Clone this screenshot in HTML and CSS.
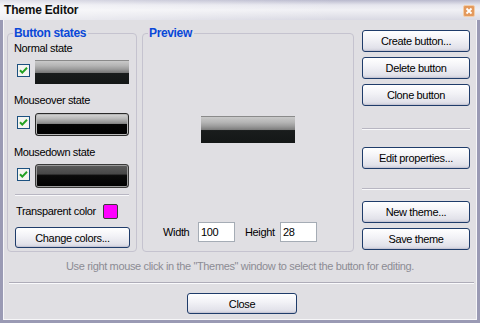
FILE: index.html
```html
<!DOCTYPE html>
<html lang="en">
<head>
    <meta charset="UTF-8">
    <title>Theme Editor</title>
    <link rel="stylesheet" href="styles.css">
</head>
<body>
    <div class="window">
        <div class="titlebar">
            <span class="title">Theme Editor</span>
            <span class="close-x">
                <svg width="12" height="12" viewBox="0 0 12 12">
                    <rect x="0.5" y="0.5" width="11" height="11" rx="1.5" fill="#e3995d" stroke="#f3cda9"/>
                    <path d="M3.5 3.5 L8.5 8.5 M8.5 3.5 L3.5 8.5" stroke="#fff" stroke-width="1.8"/>
                </svg>
            </span>
        </div>
        <div class="content">
            <div class="top">
                <!-- button states -->
                <div class="group states">
                    <div class="group-title">Button states</div>

                    <div class="state-label">Normal state</div>
                    <div class="state-row">
                        <span class="check"><svg width="13" height="13" viewBox="0 0 13 13"><rect x="0.5" y="0.5" width="12" height="12" fill="#f4f4f0" stroke="#1c5180"/><path d="M3 6.2 L5.3 8.6 L10 3.8" fill="none" stroke="#21a121" stroke-width="2"/></svg></span>
                        <div class="look normal"></div>
                    </div>

                    <div class="state-label">Mouseover state</div>
                    <div class="state-row">
                        <span class="check"><svg width="13" height="13" viewBox="0 0 13 13"><rect x="0.5" y="0.5" width="12" height="12" fill="#f4f4f0" stroke="#1c5180"/><path d="M3 6.2 L5.3 8.6 L10 3.8" fill="none" stroke="#21a121" stroke-width="2"/></svg></span>
                        <div class="look over"></div>
                    </div>

                    <div class="state-label">Mousedown state</div>
                    <div class="state-row">
                        <span class="check"><svg width="13" height="13" viewBox="0 0 13 13"><rect x="0.5" y="0.5" width="12" height="12" fill="#f4f4f0" stroke="#1c5180"/><path d="M3 6.2 L5.3 8.6 L10 3.8" fill="none" stroke="#21a121" stroke-width="2"/></svg></span>
                        <div class="look down"></div>
                    </div>

                    <div class="sep"></div>

                    <div class="transparent-row">
                        <span class="transparent-label">Transparent color</span>
                        <span class="color-box"></span>
                    </div>
                    <button class="btn change">Change colors...</button>
                </div>

                <!-- preview -->
                <div class="group preview">
                    <div class="group-title">Preview</div>
                    <div class="look normal big"></div>
                    <div class="size-row">
                        <label for="w">Width</label>
                        <input type="text" id="w" value="100">
                        <label for="h">Height</label>
                        <input type="text" id="h" value="28">
                    </div>
                </div>

                <!-- actions -->
                <div class="actions">
                    <button class="btn">Create button...</button>
                    <button class="btn gap">Delete button</button>
                    <button class="btn gap">Clone button</button>
                    <div class="sep first"></div>
                    <button class="btn edit">Edit properties...</button>
                    <div class="sep second"></div>
                    <button class="btn new">New theme...</button>
                    <button class="btn gap">Save theme</button>
                </div>
            </div>

            <p class="hint">Use right mouse click in the "Themes" window to select the button for editing.</p>
            <div class="hr"></div>
            <div class="footer">
                <button class="btn close">Close</button>
            </div>
        </div>
    </div>
</body>
</html>
```

FILE: styles.css
```css
body {
    margin: 0;
    font-family: "Liberation Sans", Arial, sans-serif;
    font-size: 11px;
    letter-spacing: -0.35px;
    color: #000;
    background: #e0dfe3;
}
.window {
    width: 480px;
    height: 323px;
    box-sizing: border-box;
    border: 3px solid #9a9ab4;
    border-top: 0;
    background: #e0dfe3;
    display: flex;
    flex-direction: column;
}
.titlebar {
    height: 20px;
    margin: 0 -3px;
    display: flex;
    align-items: center;
    justify-content: space-between;
    padding: 0 5px 0 4px;
    background:
        linear-gradient(to right, rgba(255, 255, 255, 0.55), rgba(255, 255, 255, 0) 70%),
        linear-gradient(#b9b9cd 0, #e6e6ee 25%, #f1f1f5 50%, #d9d9e3 100%);
}
.title {
    font-weight: bold;
    font-size: 12px;
    letter-spacing: -0.2px;
    color: #111;
}
.close-x {
    display: flex;
    margin-top: 1px;
}
.content {
    flex: 1;
    padding: 10px 4px 0 4px;
    box-shadow: inset 1px 0 0 #f6f6f8, inset -1px -1px 0 #f6f6f8;
}
.top {
    display: grid;
    grid-template-columns: 130px 212px 111px;
    column-gap: 5px;
}
.top .actions {
    margin-left: 3px;
}
.group {
    position: relative;
    margin-top: 3px;
    height: 219px;
    box-sizing: border-box;
    border: 1px solid #c5c3cf;
    border-radius: 4px;
}
.group-title {
    position: absolute;
    top: -8px;
    left: 5px;
    padding: 0 2px 0 1px;
    background: #e0dfe3;
    color: #0a48d8;
    font-weight: bold;
    font-size: 12px;
    line-height: 14px;
}
.states {
    padding: 7px 7px 0 6px;
}
.state-label {
    line-height: 14px;
    margin-bottom: 5px;
}
.state-row {
    height: 24px;
    display: flex;
    align-items: center;
    margin-bottom: 9px;
}
.check {
    display: flex;
    margin: -4px 5px 0 3px;
}
.look {
    width: 94px;
    height: 24px;
    box-sizing: border-box;
}
.look.normal {
    border-top: 1px solid #8a8a8a;
    background: linear-gradient(#c9c9c9 0, #b5b5b5 20%, #9c9c9c 35%, #7a7a7a 50%, #191c1c 52%, #141717 100%);
}
.look.over {
    height: 23px;
    border: 1px solid #2a2a2a;
    border-radius: 3px;
    box-shadow: inset 0 0 0 1px #b8b8b8;
    background: linear-gradient(#d6d6d6 0, #bcbcbc 20%, #8c8c8c 45%, #050505 50%, #000 100%);
}
.look.down {
    border: 1px solid #3a3a3a;
    border-radius: 3px;
    box-shadow: inset 0 0 0 1px #9a9a9a;
    background: linear-gradient(#5c5c5c 0, #474747 40%, #0a0a0a 48%, #000 100%);
}
.look.big {
    height: 27px;
    margin-top: 82px;
}
.sep {
    border-top: 1px solid #b8b6c2;
    border-bottom: 1px solid #f8f8fa;
}
.states .sep {
    margin: -3px 0 0 1px;
}
.transparent-row {
    display: flex;
    align-items: center;
    margin-top: 7px;
    height: 16px;
}
.transparent-label {
    width: 89px;
    padding-left: 2px;
    box-sizing: border-box;
    white-space: nowrap;
}
.color-box {
    width: 15px;
    height: 15px;
    box-sizing: border-box;
    background: #ff00ff;
    border: 1px solid #3c3c3c;
    border-radius: 2px;
}
.btn {
    display: block;
    width: 100%;
    height: 22px;
    padding: 0;
    font-family: inherit;
    font-size: 11px;
    letter-spacing: inherit;
    color: #000;
    border: 1px solid #1f3c6a;
    border-radius: 3px;
    background: linear-gradient(#ffffff 0, #f3f3f7 40%, #e2e2ea 85%, #cfcfdb 100%);
    box-shadow: inset 0 -1px 0 #c6c6d4;
}
.btn.change {
    width: 115px;
    height: 21px;
    margin: 8px 0 0 1px;
}
.preview {
    display: flex;
    flex-direction: column;
    align-items: center;
}
.size-row {
    align-self: flex-start;
    display: flex;
    align-items: center;
    margin: auto 0 9px 20px;
}
.size-row label {
    width: 35px;
}
.size-row input {
    width: 37px;
    height: 20px;
    box-sizing: border-box;
    margin: 0 10px 0 0;
    padding: 0 2px;
    border: 1px solid #a5acb5;
    font-family: inherit;
    font-size: 11px;
    letter-spacing: inherit;
    background: #fff;
}
.actions {
    display: flex;
    flex-direction: column;
}
.actions .gap {
    margin-top: 5px;
}
.actions .sep.first {
    margin-top: 22px;
}
.actions .edit {
    margin-top: 17px;
}
.actions .sep.second {
    margin-top: 19px;
}
.actions .new {
    margin-top: 11px;
}
.hint {
    margin: 7px 0 0;
    line-height: 14px;
    text-align: center;
    color: #8c8c94;
}
.hr {
    margin: 9px -1px 0 2px;
    border-top: 1px solid #aeacb8;
    border-bottom: 1px solid #fafafc;
}
.footer {
    display: flex;
    justify-content: center;
    padding-left: 4px;
}
.btn.close {
    width: 110px;
    height: 21px;
    margin-top: 9px;
}
```
